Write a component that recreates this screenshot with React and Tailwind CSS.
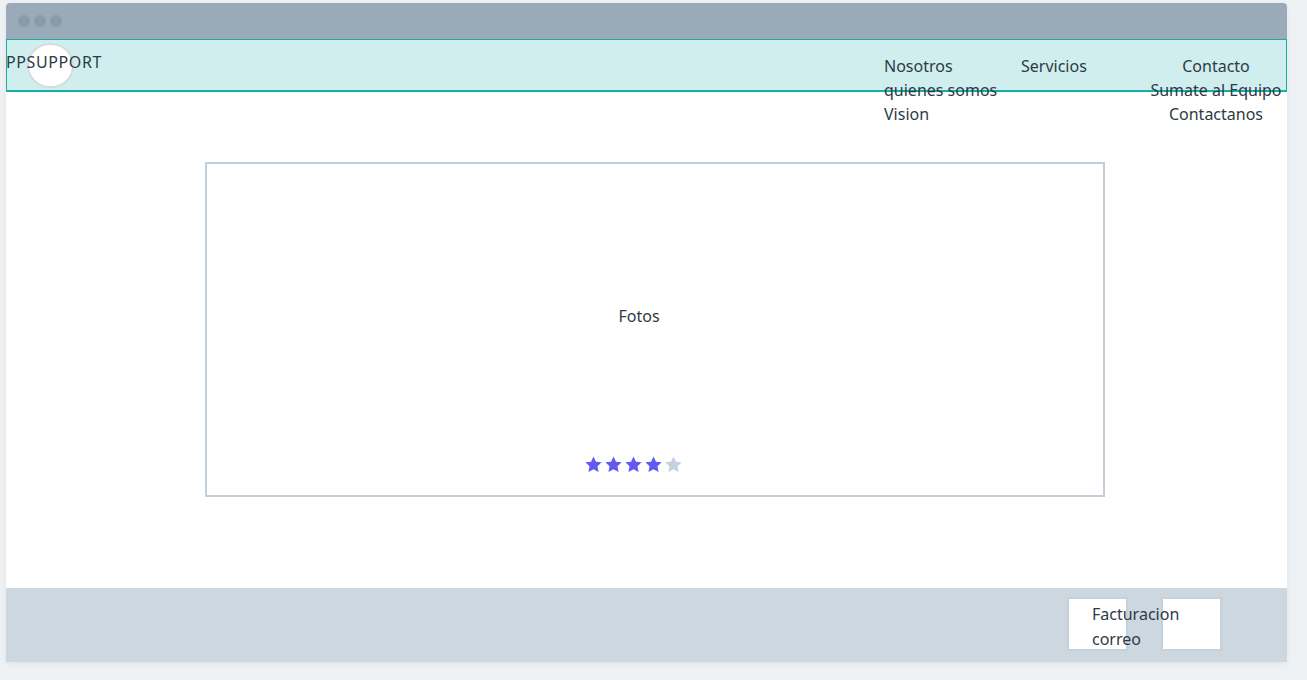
import React from "react";

const Star = ({ on }) => (
  <svg width="19" height="19" viewBox="0 0 24 24" className={on ? "fill-[#6159f0]" : "fill-[#c5d0da]"}>
    <path d="M12 1.8l3.1 6.6 7.2.9-5.3 5 1.4 7.1L12 17.9l-6.4 3.5 1.4-7.1-5.3-5 7.2-.9z" />
  </svg>
);

export default function App() {
  return (
    <div className="w-[1307px] h-[680px] bg-[#eef2f5] pt-[3px] pl-[6px] font-['Noto_Sans','Lato',sans-serif] text-[#2d3a45] text-[16px] overflow-hidden">
      <div className="w-[1281px] h-[659px] bg-white rounded-t-[4px] shadow-[0_2px_6px_rgba(0,0,0,0.06)] flex flex-col">
        {/* window chrome */}
        <div className="h-[36px] bg-[#9aaab8] rounded-t-[4px] flex items-center gap-[4px] pl-[12px] shrink-0">
          <span className="w-[12px] h-[12px] rounded-full bg-[#8b9baa]" />
          <span className="w-[12px] h-[12px] rounded-full bg-[#8b9baa]" />
          <span className="w-[12px] h-[12px] rounded-full bg-[#8b9baa]" />
        </div>

        {/* header */}
        <div className="relative z-10 h-[53px] bg-[#d0eeee] border border-b-2 border-[#17b09f] flex shrink-0">
          <div className="relative w-[860px] shrink-0">
            <div className="absolute left-[20px] top-[3px] w-[47px] h-[45px] rounded-full bg-white border-2 border-[#d5dbe0]" />
            <span className="relative block mt-[10px] -ml-[1px] leading-[24px] tracking-[0.6px]">PPSUPPORT</span>
          </div>
          <div className="flex pt-[14px] leading-[24px] h-fit">
            <div className="flex flex-col w-[137px] ml-[17px]">
              <span>Nosotros</span>
              <span className="whitespace-nowrap">quienes somos</span>
              <span>Vision</span>
            </div>
            <div className="w-[127px]">Servicios</div>
            <div className="flex flex-col items-center w-[136px] -mr-[2px]">
              <span>Contacto</span>
              <span className="whitespace-nowrap">Sumate al Equipo</span>
              <span>Contactanos</span>
            </div>
          </div>
        </div>

        {/* main */}
        <div className="flex-1 pt-[70px] pl-[199px]">
          <div className="w-[900px] h-[335px] border-2 border-[#c2cfd9] flex flex-col items-center">
            <span className="mt-[140px] -ml-[32px] leading-[24px]">Fotos</span>
            <div className="mt-[127px] -ml-[44px] flex gap-[1px]">
              <Star on />
              <Star on />
              <Star on />
              <Star on />
              <Star />
            </div>
          </div>
        </div>

        {/* footer */}
        <div className="h-[74px] bg-[#cdd7e0] flex items-start pt-[9px] pl-[1061px] shrink-0">
          <div className="relative w-[61px] h-[54px] bg-white border-2 border-[#c5d1db]">
            <div className="absolute left-[23px] top-[3px] leading-[25px] whitespace-nowrap">
              <div>Facturacion</div>
              <div>correo</div>
            </div>
          </div>
          <div className="w-[61px] h-[54px] bg-white border-2 border-[#c5d1db] ml-[33px]" />
        </div>
      </div>
    </div>
  );
}
